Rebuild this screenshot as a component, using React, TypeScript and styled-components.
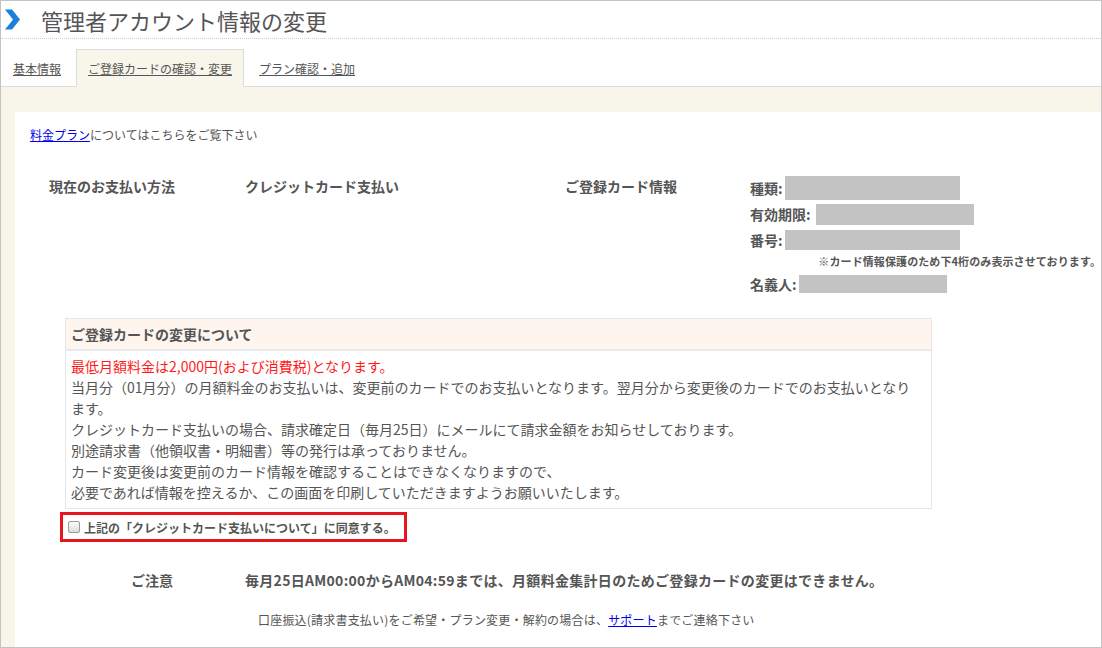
import React from 'react';
import styled, { createGlobalStyle } from 'styled-components';

const GlobalStyle = createGlobalStyle`
  html, body {
    margin: 0;
    padding: 0;
    background: #fff;
  }
  body {
    font-family: "Noto Sans CJK JP", "Noto Sans", sans-serif;
    color: #555;
  }
`;

const Frame = styled.div`
  width: 1102px;
  height: 648px;
  box-sizing: border-box;
  border: 1px solid #c3c3c3;
  display: flex;
  flex-direction: column;
  background: #fff;
  overflow: hidden;
`;

const Header = styled.header`
  height: 37px;
  display: flex;
  align-items: center;
  padding-left: 4px;
  border-bottom: 1px dotted #cfcfcf;
`;

const TitleIcon = styled.svg`
  width: 15px;
  height: 21px;
  margin-right: 21px;
  flex-shrink: 0;
`;

const Title = styled.h1`
  margin: 0;
  font-size: 22px;
  font-weight: normal;
  line-height: 30px;
  color: #555;
`;

const TabBar = styled.nav`
  height: 47px;
  display: flex;
  align-items: flex-end;
  border-bottom: 1px solid #dcdcdc;
`;

const Tab = styled.a<{ $active?: boolean }>`
  height: 37px;
  display: flex;
  align-items: center;
  padding: 0 11px;
  margin-right: 3px;
  margin-bottom: -1px;
  border: 1px solid ${(p) => (p.$active ? '#dcdcdc' : 'transparent')};
  border-bottom: none;
  background: ${(p) => (p.$active ? '#f8f5ea' : 'transparent')};
  font-size: 12px;
  color: #555;
  text-decoration: underline;
  cursor: pointer;
`;

const Content = styled.main`
  flex: 1;
  display: flex;
  background: #f8f5ea;
  padding: 25px 0 0 14px;
`;

const Panel = styled.section`
  flex: 1;
  background: #fff;
  padding: 14px 0 0 0;
  display: flex;
  flex-direction: column;
`;

const Intro = styled.p`
  margin: 0 0 31px 15px;
  font-size: 12px;
  line-height: 18px;
`;

const Link = styled.a`
  color: #0000ee;
  text-decoration: underline;
`;

const InfoGrid = styled.div`
  display: grid;
  grid-template-columns: 196px 320px 185px 1fr;
  padding-left: 34px;
`;

const Label = styled.div<{ $spread?: boolean }>`
  font-size: 14px;
  font-weight: bold;
  line-height: 22px;
  letter-spacing: ${(p) => (p.$spread ? '0.3px' : 'normal')};
`;

const CardList = styled.div`
  display: flex;
  flex-direction: column;
`;

const CardRow = styled.div<{ $gap?: number }>`
  height: 26px;
  display: flex;
  align-items: center;
  margin-top: ${(p) => p.$gap ?? 0}px;
  font-size: 14px;
  font-weight: bold;
`;

const Masked = styled.span<{ $w: number; $h: number; $shift?: number }>`
  display: inline-block;
  width: ${(p) => p.$w}px;
  height: ${(p) => p.$h}px;
  margin-left: ${(p) => p.$shift ?? 2}px;
  background: #c3c3c3;
`;

const CardNote = styled.div`
  text-align: right;
  padding-right: 0;
  font-size: 11px;
  font-weight: bold;
  line-height: 16px;
  letter-spacing: 0.1px;
  color: #555;
`;

const NoticeBox = styled.div`
  width: 867px;
  box-sizing: border-box;
  margin: 21px 0 0 50px;
  border: 1px solid #e6e6e6;
`;

const NoticeHead = styled.div`
  height: 30px;
  display: flex;
  align-items: center;
  padding-left: 5px;
  background: #fef5ef;
  border-bottom: 2px solid #e9e9e9;
  font-size: 14px;
  font-weight: bold;
`;

const NoticeBody = styled.div`
  padding: 5px 12px 5px 5px;
  font-size: 14px;
  line-height: 21px;
`;

const Red = styled.span`
  color: #ff1a1a;
`;

const AgreeBox = styled.label`
  align-self: flex-start;
  margin: 3px 0 0 45px;
  width: 347px;
  height: 30px;
  box-sizing: border-box;
  border: 3px solid #e8141e;
  display: flex;
  align-items: center;
  padding-left: 5px;
  font-size: 12px;
  font-weight: bold;
  cursor: pointer;
`;

const Check = styled.input`
  appearance: none;
  width: 12px;
  height: 12px;
  margin: 0 4px 0 0;
  border: 1px solid #9a9a9a;
  border-radius: 2px;
  background: linear-gradient(#fcfcfc, #dcdcdc);
`;

const CautionRow = styled.div`
  display: grid;
  grid-template-columns: 114px 1fr;
  padding-left: 116px;
  margin-top: 27px;
`;

const Footnote = styled.p`
  margin: 20px 0 0 243px;
  font-size: 12px;
  line-height: 18px;
  letter-spacing: 0.2px;
`;

const Chevron = () => (
  <TitleIcon viewBox="0 0 15 21">
    <polygon points="0,0.5 7,0.5 15,10.5 7,20.5 0,20.5 8,10.5" fill="#1c7fdc" />
  </TitleIcon>
);

const noticeLines = [
  '当月分（01月分）の月額料金のお支払いは、変更前のカードでのお支払いとなります。翌月分から変更後のカードでのお支払いとなります。',
  'クレジットカード支払いの場合、請求確定日（毎月25日）にメールにて請求金額をお知らせしております。',
  '別途請求書（他領収書・明細書）等の発行は承っておりません。',
  'カード変更後は変更前のカード情報を確認することはできなくなりますので、',
  '必要であれば情報を控えるか、この画面を印刷していただきますようお願いいたします。',
];

export default function App() {
  return (
    <>
      <GlobalStyle />
      <Frame>
        <Header>
          <Chevron />
          <Title>管理者アカウント情報の変更</Title>
        </Header>
        <TabBar>
          <Tab>基本情報</Tab>
          <Tab $active>ご登録カードの確認・変更</Tab>
          <Tab>プラン確認・追加</Tab>
        </TabBar>
        <Content>
          <Panel>
            <Intro>
              <Link>料金プラン</Link>についてはこちらをご覧下さい
            </Intro>
            <InfoGrid>
              <Label>現在のお支払い方法</Label>
              <Label>クレジットカード支払い</Label>
              <Label>ご登録カード情報</Label>
              <CardList>
                <CardRow>
                  種類:<Masked $w={175} $h={24} />
                </CardRow>
                <CardRow>
                  有効期限:<Masked $w={158} $h={21} $shift={5} />
                </CardRow>
                <CardRow>
                  番号:<Masked $w={175} $h={20} />
                </CardRow>
                <CardNote>※カード情報保護のため下4桁のみ表示させております。</CardNote>
                <CardRow $gap={2}>
                  名義人:<Masked $w={148} $h={18} />
                </CardRow>
              </CardList>
            </InfoGrid>
            <NoticeBox>
              <NoticeHead>ご登録カードの変更について</NoticeHead>
              <NoticeBody>
                <Red>最低月額料金は2,000円(および消費税)となります。</Red>
                {noticeLines.map((line) => (
                  <div key={line}>{line}</div>
                ))}
              </NoticeBody>
            </NoticeBox>
            <AgreeBox>
              <Check type="checkbox" />
              上記の「クレジットカード支払いについて」に同意する。
            </AgreeBox>
            <CautionRow>
              <Label>ご注意</Label>
              <Label $spread>毎月25日AM00:00からAM04:59までは、月額料金集計日のためご登録カードの変更はできません。</Label>
            </CautionRow>
            <Footnote>
              口座振込(請求書支払い)をご希望・プラン変更・解約の場合は、<Link>サポート</Link>までご連絡下さい
            </Footnote>
          </Panel>
        </Content>
      </Frame>
    </>
  );
}
